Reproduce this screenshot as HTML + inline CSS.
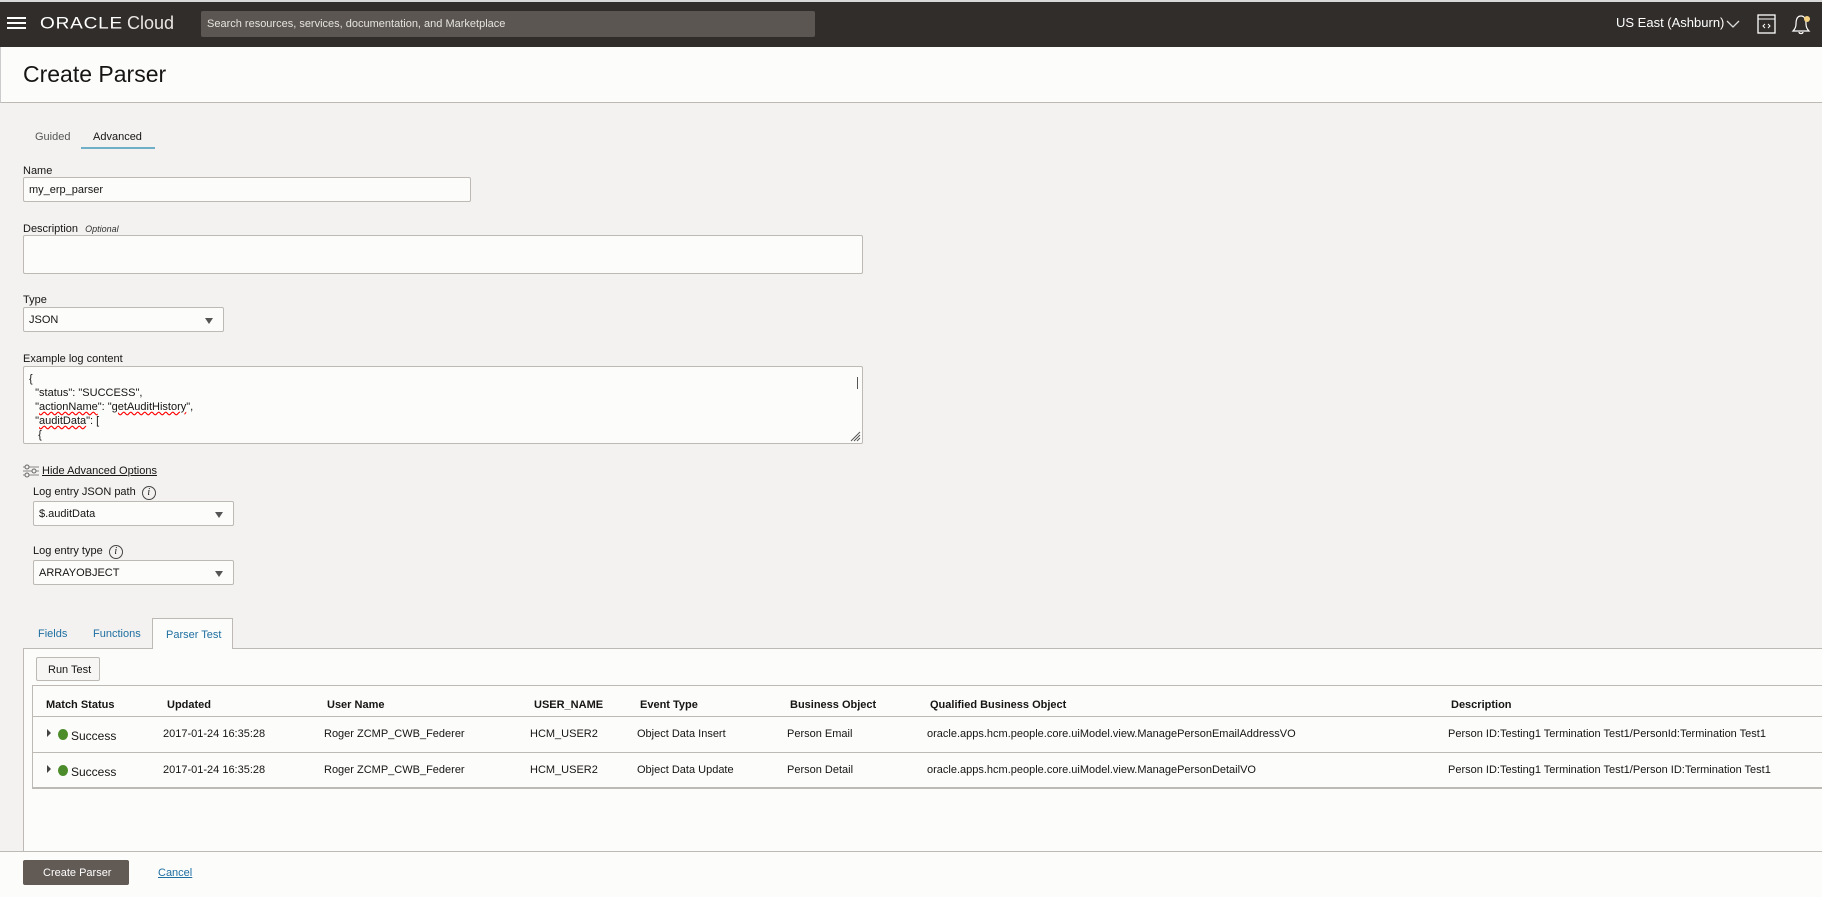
<!DOCTYPE html>
<html><head><meta charset="utf-8"><style>
*{box-sizing:border-box;margin:0;padding:0}
body{width:1822px;height:897px;overflow:hidden;background:#f3f2f1;font-family:"Liberation Sans",Arial,sans-serif;font-size:11px;color:#161513;position:relative}
.a{position:absolute;white-space:nowrap}
.hdr{position:absolute;left:0;top:0;width:1822px;height:47px;background:#312d2a;border-top:2px solid #d8d8d8}
.title{position:absolute;left:0;top:47px;width:1822px;height:56px;background:#fcfcfb;border-bottom:1px solid #bdbab6;border-left:1px solid #ccc}
.inp{position:absolute;background:#fcfcfb;border:1px solid #bdbab6;border-radius:2px}
.sel:after{content:"";position:absolute;right:10px;top:10px;border-left:4px solid transparent;border-right:4px solid transparent;border-top:6px solid #555}
.info{display:inline-block;width:14px;height:14px;border:1px solid #444;border-radius:50%;font:italic 10px "Liberation Serif",serif;text-align:center;line-height:12px;margin-left:6px;vertical-align:0px}
.row{position:absolute;left:0;width:1790px;}
</style></head><body>
<div class="hdr"></div>
<div class="a" style="left:7px;top:17px;width:19px;height:2px;background:#fff;box-shadow:0 5px 0 #fff,0 10px 0 #fff"></div>
<div class="a" style="left:40px;top:13px;color:#fff;font-size:19px;letter-spacing:0.8px;transform:scaleY(0.85)">ORACLE</div>
<div class="a" style="left:127px;top:13px;color:#e8e6e3;font-size:18px">Cloud</div>
<div class="a" style="left:201px;top:11px;width:614px;height:26px;background:#5b5651;border-radius:2px;color:#e6e3df;font-size:11px;padding:7px 6px">Search resources, services, documentation, and Marketplace</div>
<div class="a" style="left:1616px;top:15px;color:#fff;font-size:13px">US East (Ashburn)</div>
<svg class="a" style="left:1726px;top:20px" width="14" height="9"><path d="M1 1l6 6 6-6" stroke="#ddd" fill="none" stroke-width="1.3"/></svg>
<svg class="a" style="left:1757px;top:14px" width="20" height="20"><rect x="1" y="1" width="17" height="18" stroke="#fff" fill="none" stroke-width="1.3"/><line x1="1" y1="5" x2="18" y2="5" stroke="#fff"/><path d="M8 10l-2 2 2 2M11 10l2 2-2 2" stroke="#fff" fill="none"/></svg>
<svg class="a" style="left:1790px;top:13px" width="24" height="22"><path d="M11 3c-4 0-5 4-5 8 0 3-1 5-3 7h16c-2-2-3-4-3-7 0-4-1-8-5-8zM9 19c0 2 4 2 4 0" stroke="#fff" fill="none" stroke-width="1.2"/><circle cx="17" cy="6" r="3" fill="#f4d081"/></svg>
<div class="title"></div>
<div class="a" style="left:23px;top:61px;font-size:23px">Create Parser</div>
<div class="a" style="left:35px;top:131px;color:#555">Guided</div>
<div class="a" style="left:93px;top:131px">Advanced</div>
<div class="a" style="left:81px;top:147px;width:74px;height:2px;background:#6fb0c8"></div>
<div class="a" style="left:23px;top:165px">Name</div>
<div class="inp" style="left:23px;top:177px;width:448px;height:25px;padding:6px 5px">my_erp_parser</div>
<div class="a" style="left:23px;top:223px">Description <i style="font-size:9px;margin-left:4px;color:#333">Optional</i></div>
<div class="inp" style="left:23px;top:235px;width:840px;height:39px"></div>
<div class="a" style="left:23px;top:294px">Type</div>
<div class="inp sel" style="left:23px;top:307px;width:201px;height:25px;padding:6px 5px">JSON</div>
<div class="a" style="left:23px;top:353px">Example log content</div>
<div class="inp" style="left:23px;top:366px;width:840px;height:78px;overflow:hidden;padding:5px 5px;font-size:11px;line-height:14px;white-space:pre">{
  "status": "SUCCESS",
  "<u style="text-decoration:underline wavy red">actionName</u>": "<u style="text-decoration:underline wavy red">getAuditHistory</u>",
  "<u style="text-decoration:underline wavy red">auditData</u>": [
   {
    "date": "2017-01-24 16:35:28"</div>
<div class="a" style="left:857px;top:377px;width:1px;height:12px;background:#555"></div>
<svg class="a" style="left:850px;top:431px" width="11" height="11"><path d="M10 1L1 10M10 4L4 10M10 7L7 10" stroke="#555"/></svg>
<svg class="a" style="left:23px;top:464px" width="16" height="14"><path d="M0 3h16M0 7h16M0 11h16" stroke="#666" stroke-width="0.8"/><circle cx="4" cy="3" r="2" fill="#f3f2f1" stroke="#666"/><circle cx="11" cy="7" r="2" fill="#f3f2f1" stroke="#666"/><circle cx="4" cy="11" r="2" fill="#f3f2f1" stroke="#666"/></svg>
<div class="a" style="left:42px;top:465px;text-decoration:underline">Hide Advanced Options</div>
<div class="a" style="left:33px;top:486px">Log entry JSON path<span class="info">i</span></div>
<div class="inp sel" style="left:33px;top:501px;width:201px;height:25px;padding:6px 5px">$.auditData</div>
<div class="a" style="left:33px;top:545px">Log entry type<span class="info">i</span></div>
<div class="inp sel" style="left:33px;top:560px;width:201px;height:25px;padding:6px 5px">ARRAYOBJECT</div>
<div class="a" style="left:38px;top:628px;color:#1f6fa0">Fields</div>
<div class="a" style="left:93px;top:628px;color:#1f6fa0">Functions</div>
<div class="a" style="left:152px;top:618px;width:81px;height:31px;background:#fcfcfb;border:1px solid #bdbab6;border-bottom:none;color:#1f6fa0;padding:10px 0 0 13px;z-index:2">Parser Test</div>
<div class="a" style="left:23px;top:648px;width:1799px;height:204px;background:#fcfcfb;border-top:1px solid #bdbab6;border-left:1px solid #bdbab6"></div>
<div class="a" style="left:36px;top:657px;width:64px;height:24px;border:1px solid #bdbab6;border-radius:2px;background:#f7f6f5;padding:6px 0 0 11px">Run Test</div>
<div class="a" style="left:32px;top:685px;width:1790px;height:104px;border-top:1px solid #bdbab6;border-left:1px solid #bdbab6;border-bottom:2px solid #bdbab6">
 <div class="row" style="top:0;height:31px;border-bottom:1px solid #bdbab6;font-weight:bold">
  <span class="a" style="left:13px;top:13px">Match Status</span><span class="a" style="left:134px;top:13px">Updated</span><span class="a" style="left:294px;top:13px">User Name</span><span class="a" style="left:501px;top:13px">USER_NAME</span><span class="a" style="left:607px;top:13px">Event Type</span><span class="a" style="left:757px;top:13px">Business Object</span><span class="a" style="left:897px;top:13px">Qualified Business Object</span><span class="a" style="left:1418px;top:13px">Description</span>
 </div>
 <div class="row" style="top:31px;height:36px;border-bottom:1px solid #bdbab6;font-size:11px">
  <span class="a" style="left:14px;top:12px;border-left:4px solid #444;border-top:4px solid transparent;border-bottom:4px solid transparent"></span><span class="a" style="left:25px;top:12px;width:10px;height:11px;border-radius:50%;background:#4c8c2b"></span><span class="a" style="left:38px;top:12px;font-size:12px">Success</span>
  <span class="a" style="left:130px;top:11px">2017-01-24 16:35:28</span><span class="a" style="left:291px;top:11px">Roger ZCMP_CWB_Federer</span><span class="a" style="left:497px;top:11px">HCM_USER2</span><span class="a" style="left:604px;top:11px">Object Data Insert</span><span class="a" style="left:754px;top:11px">Person Email</span><span class="a" style="left:894px;top:11px">oracle.apps.hcm.people.core.uiModel.view.ManagePersonEmailAddressVO</span><span class="a" style="left:1415px;top:11px">Person ID:Testing1 Termination Test1/PersonId:Termination Test1</span>
 </div>
 <div class="row" style="top:67px;height:36px;font-size:11px">
  <span class="a" style="left:14px;top:12px;border-left:4px solid #444;border-top:4px solid transparent;border-bottom:4px solid transparent"></span><span class="a" style="left:25px;top:12px;width:10px;height:11px;border-radius:50%;background:#4c8c2b"></span><span class="a" style="left:38px;top:12px;font-size:12px">Success</span>
  <span class="a" style="left:130px;top:11px">2017-01-24 16:35:28</span><span class="a" style="left:291px;top:11px">Roger ZCMP_CWB_Federer</span><span class="a" style="left:497px;top:11px">HCM_USER2</span><span class="a" style="left:604px;top:11px">Object Data Update</span><span class="a" style="left:754px;top:11px">Person Detail</span><span class="a" style="left:894px;top:11px">oracle.apps.hcm.people.core.uiModel.view.ManagePersonDetailVO</span><span class="a" style="left:1415px;top:11px">Person ID:Testing1 Termination Test1/Person ID:Termination Test1</span>
 </div>
</div>
<div class="a" style="left:0;top:851px;width:1822px;height:46px;background:#fcfcfb;border-top:1px solid #bdbab6"></div>
<div class="a" style="left:23px;top:860px;width:106px;height:25px;background:#625a54;border-radius:2px;color:#fff;padding:7px 0 0 20px">Create Parser</div>
<div class="a" style="left:158px;top:867px;color:#1f6fa0;text-decoration:underline">Cancel</div>
</body></html>
